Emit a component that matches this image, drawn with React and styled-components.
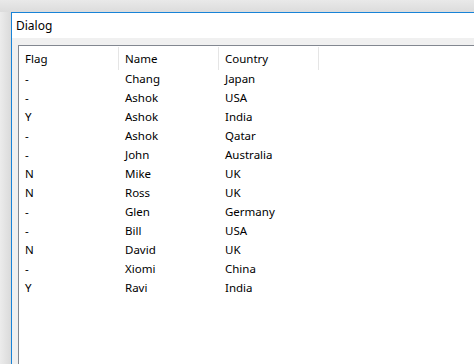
import React from "react";
import styled, { createGlobalStyle } from "styled-components";

const Global = createGlobalStyle`
  html, body { margin: 0; padding: 0; height: 100%; overflow: hidden; }
  body {
    background: linear-gradient(90deg, #ececec 0px, #dadada 11px, #e4e4e4 11px);
    font-family: "Segoe UI", "Noto Sans", "Liberation Sans", sans-serif;
    font-size: 11.5px;
    color: #000;
  }
  #root { height: 100%; }
`;

const Page = styled.div`
  height: 100%;
  box-sizing: border-box;
  padding: 12px 0 0 11px;
  display: flex;
  background: linear-gradient(180deg, #e9e9e9 0px, #dcdcdc 12px, transparent 12px);
`;

const Window = styled.div`
  flex: 1;
  min-width: 0;
  border-top: 1px solid #1883d7;
  border-left: 1px solid #1883d7;
  background: #f0f0f0;
  display: flex;
  flex-direction: column;
  overflow: hidden;
`;

const TitleBar = styled.div`
  height: 25px;
  flex: none;
  background: #fff;
  display: flex;
  align-items: center;
  padding-left: 4px;
  font-size: 12px;
  line-height: 1;
`;

const Content = styled.div`
  flex: 1;
  min-height: 0;
  padding: 7px 0 0 6px;
  display: flex;
`;

const Table = styled.div`
  flex: 1;
  min-width: 0;
  background: #fff;
  border-top: 1px solid #828790;
  border-left: 1px solid #828790;
  overflow: hidden;
`;

const HeaderRow = styled.div`
  display: flex;
  height: 23px;
`;

const HeaderCell = styled.div`
  width: 100px;
  flex: none;
  box-sizing: border-box;
  padding: 2px 0 0 6px;
  display: flex;
  align-items: center;
  position: relative;
  &::after {
    content: "";
    position: absolute;
    right: 0;
    top: 1px;
    bottom: -1px;
    width: 1px;
    background: #e5e5e5;
  }
`;

const Row = styled.div`
  display: flex;
  height: 19px;
  align-items: center;
`;

const Cell = styled.div`
  width: 100px;
  flex: none;
  box-sizing: border-box;
  padding-left: 6px;
  white-space: nowrap;
`;

const data = [
  ["-", "Chang", "Japan"],
  ["-", "Ashok", "USA"],
  ["Y", "Ashok", "India"],
  ["-", "Ashok", "Qatar"],
  ["-", "John", "Australia"],
  ["N", "Mike", "UK"],
  ["N", "Ross", "UK"],
  ["-", "Glen", "Germany"],
  ["-", "Bill", "USA"],
  ["N", "David", "UK"],
  ["-", "Xiomi", "China"],
  ["Y", "Ravi", "India"],
];

export default function App() {
  return (
    <Page>
      <Global />
      <Window>
        <TitleBar>Dialog</TitleBar>
        <Content>
          <Table>
            <HeaderRow>
              <HeaderCell>Flag</HeaderCell>
              <HeaderCell>Name</HeaderCell>
              <HeaderCell>Country</HeaderCell>
            </HeaderRow>
            {data.map((r, i) => (
              <Row key={i}>
                {r.map((c, j) => (
                  <Cell key={j}>{c}</Cell>
                ))}
              </Row>
            ))}
          </Table>
        </Content>
      </Window>
    </Page>
  );
}
